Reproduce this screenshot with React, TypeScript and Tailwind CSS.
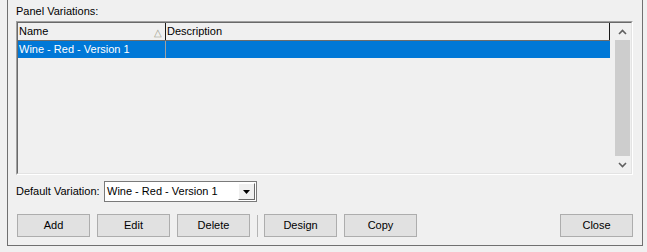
import React from "react";

const font = { fontFamily: '"Liberation Sans", Arial, sans-serif' };

function Btn({ label, w = "w-[73px]" }: { label: string; w?: string }) {
  return (
    <div
      className={`${w} h-[23px] flex items-center justify-center bg-[#e1e1e1] border border-[#adadad] text-[11px] text-black`}
    >
      {label}
    </div>
  );
}

export default function App() {
  return (
    <div
      className="w-[647px] h-[252px] bg-[#f0f0f0] overflow-hidden text-[11px] text-black"
      style={font}
    >
      <div className="ml-[7px] w-[636px] h-[246px] border-l border-r border-b border-[#707070] flex flex-col pl-[8px] pr-[9px]">
        <div className="h-[21px] pt-[5px] leading-[13px]">Panel Variations:</div>
        <div className="w-[617px] h-[154px] border-t border-l border-[#a0a0a0] border-r border-b border-r-white border-b-white">
          <div className="w-full h-full border-t border-l border-[#696969] border-r border-b border-r-[#e3e3e3] border-b-[#e3e3e3] bg-[#f0f0f0] flex">
            <div className="flex-1 flex flex-col">
              <div className="h-[18px] flex border-b border-[#6d6d6d] bg-[#f0f0f0] w-[592px]">
                <div className="w-[148px] flex items-center pl-[1px] border-r border-[#1a1a1a] relative">
                  <span>Name</span>
                  <span className="absolute right-[3px] top-[2px] text-[#a0a08a] text-[10px]">△</span>
                </div>
                <div className="flex-1 flex items-center pl-[1px] border-r border-[#1a1a1a]">
                  Description
                </div>
              </div>
              <div className="h-[17px] w-[592px] flex bg-[#0078d7] text-white">
                <div className="w-[148px] flex items-center pl-[1px] border-r border-[#a0a0a0]">
                  Wine - Red - Version 1
                </div>
                <div className="flex-1" />
              </div>
            </div>
            <div className="w-[17px] flex flex-col bg-[#f0f0f0]">
              <div className="h-[17px] flex items-center justify-center">
                <svg width="9" height="6" viewBox="0 0 9 6">
                  <path d="M1 5 L4.5 1.5 L8 5" stroke="#606060" strokeWidth="1.6" fill="none" />
                </svg>
              </div>
              <div className="flex-1 mx-[1px] bg-[#cdcdcd]" />
              <div className="h-[17px] flex items-center justify-center">
                <svg width="9" height="6" viewBox="0 0 9 6">
                  <path d="M1 1 L4.5 4.5 L8 1" stroke="#606060" strokeWidth="1.6" fill="none" />
                </svg>
              </div>
            </div>
          </div>
        </div>
        <div className="flex items-center mt-[6px] h-[21px]">
          <span className="w-[88px]">Default Variation:</span>
          <div className="w-[153px] h-[21px] border border-[#7a7a7a] bg-white flex items-center">
            <span className="flex-1 pl-[2px]">Wine - Red - Version 1</span>
            <div className="w-[17px] h-[17px] mr-[1px] bg-[#f0f0f0] border-t border-l border-white border-r border-b border-r-[#696969] border-b-[#696969] flex items-center justify-center">
              <svg width="7" height="4" viewBox="0 0 7 4">
                <path d="M0 0 H7 L3.5 4 Z" fill="#000" />
              </svg>
            </div>
          </div>
        </div>
        <div className="flex items-center mt-[12px] pl-[1px]">
          <div className="flex gap-[7px]">
            <Btn label="Add" />
            <Btn label="Edit" />
            <Btn label="Delete" />
          </div>
          <div className="w-[1px] h-[22px] bg-[#b4b4b4] ml-[7px] mr-[6px]" />
          <div className="flex gap-[7px]">
            <Btn label="Design" />
            <Btn label="Copy" />
          </div>
          <div className="flex-1" />
          <Btn label="Close" />
        </div>
      </div>
    </div>
  );
}
